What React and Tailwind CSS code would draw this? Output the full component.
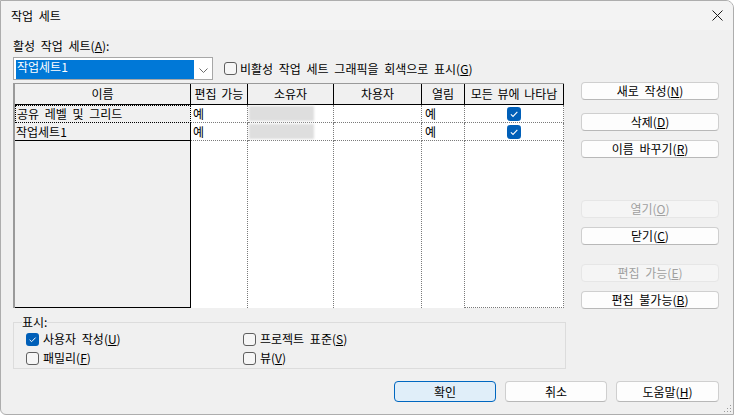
import React from 'react';

const font = { fontFamily: '"Noto Sans CJK KR", "Noto Sans", sans-serif' };

const Check = ({ size = 13 }) => (
    <svg width={size} height={size} viewBox="0 0 13 13">
        <rect x="0" y="0" width="13" height="13" rx="3" fill="#005fb8" />
        <path d="M3.6 6.8 L5.6 8.7 L9.6 4.6" fill="none" stroke="#ffffff" strokeWidth="1" />
    </svg>
);

const Box = () => (
    <span className="block w-[13px] h-[13px] rounded-[3px] border border-[#5f5f5f] bg-[#f6f6f6]" />
);

const Btn = ({ children, disabled, primary, className = '' }) => (
    <div
        className={
            'flex items-center justify-center rounded-[4px] border text-[12px] leading-none ' +
            (disabled
                ? 'bg-[#f5f5f5] border-[#e6e6e6] text-[#a0a0a0] '
                : primary
                    ? 'bg-[#e0eef9] border-[#0067c0] text-black '
                    : 'bg-[#fdfdfd] border-[#cfcfcf] border-b-[#b8b8b8] text-black ') +
            className
        }
    >
        {children}
    </div>
);

const CheckItem = ({ checked, children, className = '' }) => (
    <div className={'flex items-center h-[18px] gap-[4px] ' + className}>
        {checked ? <Check /> : <Box />}
        <span className="text-[12px] leading-none">{children}</span>
    </div>
);

const cols = ['이름', '편집 가능', '소유자', '차용자', '열림', '모든 뷰에 나타남'];

const rows = ['공유 레벨 및 그리드', '작업세트1'];

const dataCell = 'bg-white border-r border-b border-dotted border-[#7a7a7a]';

export default function App() {
    return (
        <div
            className="w-[734px] h-[415px] bg-[#f0f0f0] border border-[#adadad] rounded-tr-[8px] rounded-bl-[6px] overflow-hidden flex flex-col text-black relative [word-spacing:3px]"
            style={font}
        >
            {/* title bar */}
            <div className="h-[29px] bg-[#f3f3f3] flex items-center justify-between pl-[10px] pr-[10px]">
                <span className="text-[12px]">작업 세트</span>
                <svg width="11" height="11" viewBox="0 0 11 11">
                    <path d="M0.5 0.5 L10.5 10.5 M10.5 0.5 L0.5 10.5" stroke="#1a1a1a" strokeWidth="1" />
                </svg>
            </div>

            <div className="flex pl-[12px]">
                {/* left side */}
                <div className="w-[553px] flex flex-col">
                    <div className="mt-[8px] h-[16px] flex items-center text-[12px] leading-none">
                        활성 작업 세트(<u>A</u>):
                    </div>

                    <div className="mt-[3px] flex items-center">
                        <div className="w-[200px] h-[23px] bg-white border border-[#a7a7a7] pl-[2px] pt-[2px] flex">
                            <div className="w-[178px] h-[19px] bg-[#0078d7] text-white text-[12px] leading-[13px] pl-[1px]">
                                작업세트1
                            </div>
                            <div className="flex-1 flex items-center justify-center pt-[1px]">
                                <svg width="9" height="5" viewBox="0 0 9 5">
                                    <path d="M0.5 0.5 L4.5 4.5 L8.5 0.5" fill="none" stroke="#6a6a6a" strokeWidth="1" />
                                </svg>
                            </div>
                        </div>
                        <div className="ml-[11px] flex items-center gap-[3px]">
                            <Box />
                            <span className="text-[12px] leading-none">
                                비활성 작업 세트 그래픽을 회색으로 표시(<u>G</u>)
                            </span>
                        </div>
                    </div>

                    {/* table */}
                    <div className="mt-[3px] w-[551px] h-[225px] border-t border-l-2 border-[#9a9a9a] bg-white">
                        <div className="grid h-full grid-cols-[176px_57px_86px_88px_43px_99px] grid-rows-[21px_18px_18px_1fr]">
                            {cols.map((c) => (
                                <div
                                    key={c}
                                    className="bg-[#f0f0f0] border-r border-b border-black flex items-center justify-center text-[12px] leading-none whitespace-nowrap overflow-hidden [word-spacing:2px]"
                                >
                                    {c}
                                </div>
                            ))}

                            {rows.map((name, i) => (
                                <React.Fragment key={name}>
                                    <div
                                        className={
                                            'bg-[#f0f0f0] flex items-center pl-[1px] text-[12px] leading-none ' +
                                            (i === 0
                                                ? 'border border-dotted border-black'
                                                : 'border-r border-b border-black')
                                        }
                                    >
                                        {name}
                                    </div>
                                    <div className={dataCell + ' flex items-center pl-[2px] text-[12px] leading-none'}>예</div>
                                    <div className={dataCell + ' flex items-center pl-[1px]'}>
                                        <div className="w-[65px] h-[15px] bg-[#dedede] blur-[1px]" />
                                    </div>
                                    <div className={dataCell} />
                                    <div className={dataCell + ' flex items-center pl-[3px] text-[12px] leading-none'}>예</div>
                                    <div className={dataCell + ' flex items-center justify-center'}>
                                        <Check size={14} />
                                    </div>
                                </React.Fragment>
                            ))}

                            <div className="bg-[#f0f0f0] border-r border-b border-black" />
                            <div className="bg-white border-r border-dotted border-[#7a7a7a]" />
                            <div className="bg-white border-r border-dotted border-[#7a7a7a]" />
                            <div className="bg-white border-r border-dotted border-[#7a7a7a]" />
                            <div className="bg-white border-r border-dotted border-[#7a7a7a]" />
                            <div className="bg-white border-r border-b border-dotted border-[#7a7a7a]" />
                        </div>
                    </div>

                    {/* 표시 group */}
                    <fieldset className="mt-[6px] w-[553px] border border-[#dcdcdc] pl-[8px] pb-[1px]">
                        <legend className="text-[12px] leading-[16px] px-0">표시:</legend>
                        <div className="grid grid-cols-[217px_1fr] gap-y-[1px] pl-[4px]">
                            <CheckItem checked>사용자 작성(<u>U</u>)</CheckItem>
                            <CheckItem>프로젝트 표준(<u>S</u>)</CheckItem>
                            <CheckItem>패밀리(<u>F</u>)</CheckItem>
                            <CheckItem>뷰(<u>V</u>)</CheckItem>
                        </div>
                    </fieldset>
                </div>

                {/* right buttons */}
                <div className="ml-[15px] w-[138px] pt-[52px] flex flex-col">
                    <Btn className="h-[18px]">새로 작성(<u>N</u>)</Btn>
                    <Btn className="h-[18px] mt-[13px]">삭제(<u>D</u>)</Btn>
                    <Btn className="h-[18px] mt-[9px]">이름 바꾸기(<u>R</u>)</Btn>
                    <Btn disabled className="h-[18px] mt-[42px]">열기(<u>O</u>)</Btn>
                    <Btn className="h-[18px] mt-[9px]">닫기(<u>C</u>)</Btn>
                    <Btn disabled className="h-[18px] mt-[19px]">편집 가능(<u>E</u>)</Btn>
                    <Btn className="h-[18px] mt-[9px]">편집 불가능(<u>B</u>)</Btn>
                </div>
            </div>

            {/* bottom buttons */}
            <div className="mt-[12px] flex justify-end gap-[9px] pr-[14px]">
                <Btn primary className="w-[102px] h-[21px]">확인</Btn>
                <Btn className="w-[102px] h-[21px]">취소</Btn>
                <Btn className="w-[103px] h-[21px]">도움말(<u>H</u>)</Btn>
            </div>

            <svg className="absolute right-[1px] bottom-[1px]" width="8" height="8" viewBox="0 0 8 8">
                <rect x="6" y="0" width="1" height="1" fill="#9a9a9a" />
                <rect x="3" y="3" width="1" height="1" fill="#9a9a9a" />
                <rect x="6" y="3" width="1" height="1" fill="#9a9a9a" />
                <rect x="0" y="6" width="1" height="1" fill="#9a9a9a" />
                <rect x="3" y="6" width="1" height="1" fill="#9a9a9a" />
                <rect x="6" y="6" width="1" height="1" fill="#9a9a9a" />
            </svg>
        </div>
    );
}
